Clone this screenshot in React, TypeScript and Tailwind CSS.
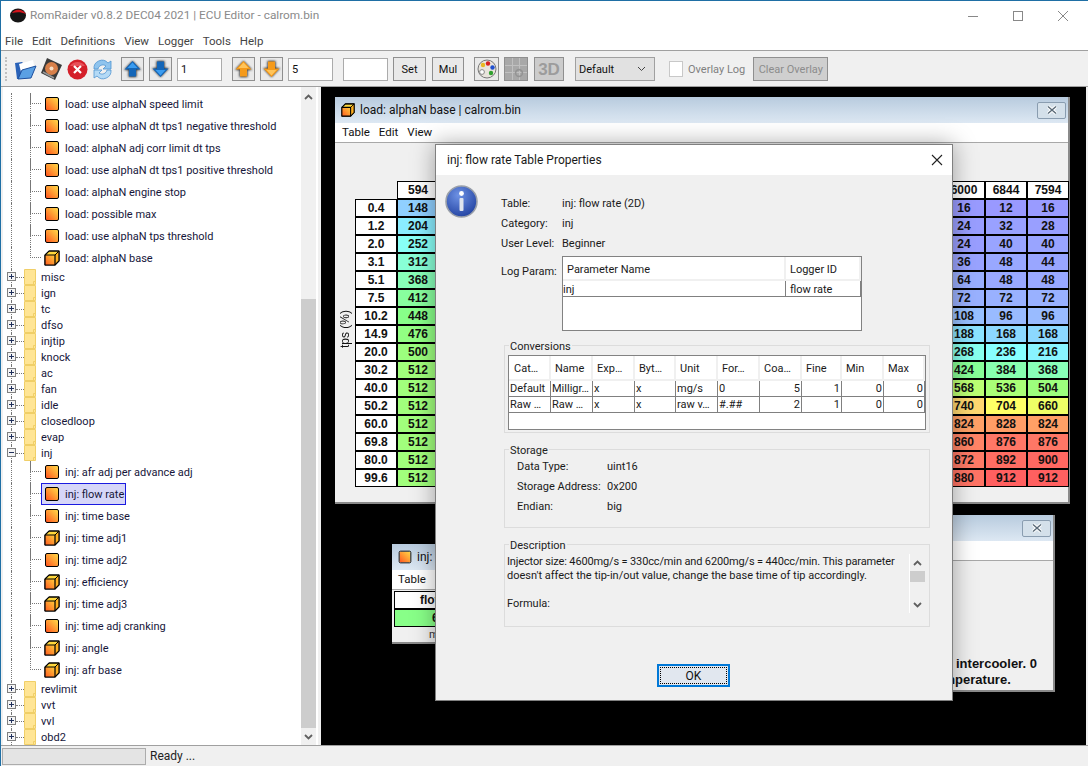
import type { ReactNode } from 'react';

const fontUi = "font-['Roboto',sans-serif]";

const rowAxis = ['0.4', '1.2', '2.0', '3.1', '5.1', '7.5', '10.2', '14.9', '20.0', '30.2', '40.0', '50.2', '60.0', '69.8', '80.0', '99.6'];
const firstCol = [148, 204, 252, 312, 368, 412, 448, 476, 500, 512, 512, 512, 512, 512, 512, 512];
const col6000 = [16, 24, 24, 36, 64, 72, 108, 188, 268, 424, 568, 740, 824, 860, 872, 880];
const col6844 = [12, 32, 40, 48, 48, 72, 96, 168, 236, 384, 536, 704, 828, 876, 892, 912];
const col7594 = [16, 28, 40, 44, 48, 72, 96, 168, 216, 368, 504, 660, 824, 876, 900, 912];

// heat scale used by the table cells
const stops: [number, number[]][] = [
  [12, [153, 153, 255]],
  [96, [153, 187, 255]],
  [168, [140, 216, 255]],
  [236, [136, 255, 255]],
  [368, [136, 255, 184]],
  [450, [136, 255, 136]],
  [536, [170, 255, 119]],
  [660, [238, 255, 102]],
  [704, [255, 255, 102]],
  [740, [255, 216, 112]],
  [824, [255, 160, 102]],
  [876, [255, 119, 102]],
  [912, [255, 96, 96]],
];

function heat(v: number) {
  for (let i = 1; i < stops.length; i++) {
    if (v <= stops[i][0]) {
      const [a, ca] = stops[i - 1];
      const [b, cb] = stops[i];
      const t = Math.max(0, (v - a) / (b - a));
      const c = ca.map((x, k) => Math.round(x + (cb[k] - x) * t));
      return `rgb(${c[0]},${c[1]},${c[2]})`;
    }
  }
  return 'rgb(255,96,96)';
}

function SquareIcon() {
  return <div className="w-[14px] h-[14px] shrink-0 rounded-[2px] border-[1.5px] border-black bg-gradient-to-tr from-[#ff4f1e] to-[#ffd848]" />;
}

function CubeIcon({ size = 16 }: { size?: number }) {
  return (
    <svg width={size} height={size} viewBox="0 0 16 16" className="shrink-0">
      <defs>
        <linearGradient id="cubeFace" x1="0" y1="1" x2="1" y2="0">
          <stop offset="0" stopColor="#ff5a1e" />
          <stop offset="1" stopColor="#ffcf3c" />
        </linearGradient>
      </defs>
      <path d="M1 5 L5 1 H15 V11 L11 15 H1 Z" fill="#ffd83c" stroke="#000" strokeWidth="1" strokeLinejoin="round" />
      <path d="M11 5 L15 1 V11 L11 15 Z" fill="#ffb020" />
      <path d="M1 5 H11 V15 H1 Z" fill="url(#cubeFace)" stroke="#000" strokeWidth="1.2" strokeLinejoin="round" />
      <path d="M11 5 L15 1" stroke="#000" strokeWidth="1" />
      <path d="M1 5 L5 1 H15 V11 L11 15" fill="none" stroke="#000" strokeWidth="1.2" />
    </svg>
  );
}

function FolderIcon() {
  return (
    <svg width="12" height="16" viewBox="0 0 12 16" className="shrink-0">
      <path d="M0.5 0.5 H11.5 V15.5 H0.5 Z" fill="#ffe595" stroke="#f0cf68" />
      <path d="M9.5 15.5 V12.5 H11.5" fill="none" stroke="#f0cf68" />
    </svg>
  );
}

function Leaf({ label, cube, selected, last }: { label: string; cube?: boolean; selected?: boolean; last?: boolean }) {
  return (
    <div className="flex h-[22px] items-stretch">
      <div className="w-[9px] shrink-0 border-r border-dotted border-[#777]" />
      <div className="w-[18px] shrink-0" />
      <div className="relative w-[11px] shrink-0">
        <div className="absolute left-0 top-0 w-[11px] h-[11px] border-l border-b border-dotted border-[#777]" />
        {!last && <div className="absolute left-0 top-0 h-full border-l border-dotted border-[#777]" />}
      </div>
      <div className={`flex items-center gap-[6px] h-[22px] pl-[4px] pr-[2px] ${selected ? 'bg-[#d6d6f8] outline outline-1 -outline-offset-1 outline-[#1a1ae0]' : ''}`}>
        {cube ? <div className="-ml-[1px] -mr-[1px]"><CubeIcon /></div> : <SquareIcon />}
        <span className="translate-y-px whitespace-nowrap text-[#16163a]">{label}</span>
      </div>
    </div>
  );
}

function Branch({ label, open }: { label: string; open?: boolean }) {
  return (
    <div className="flex h-[16px] items-center">
      <div className="relative w-[21px] h-full shrink-0">
        <div className="absolute left-[8px] top-0 h-full border-l border-dotted border-[#777]" />
        <div className="absolute left-[13px] top-[8px] w-[8px] border-t border-dotted border-[#777]" />
        <div className="absolute left-[4px] top-[3px] w-[9px] h-[9px] border border-[#808080] bg-[#f4f4f4] flex items-center justify-center">
          <div className="w-[5px] h-px bg-[#20305c]" />
          {!open && <div className="absolute w-px h-[5px] bg-[#20305c]" />}
        </div>
      </div>
      <FolderIcon />
      <span className="ml-[5px] translate-y-px whitespace-nowrap text-[#16163a]">{label}</span>
    </div>
  );
}

function Tree() {
  const load = ['load: use alphaN speed limit', 'load: use alphaN dt tps1 negative threshold', 'load: alphaN adj corr limit dt tps', 'load: use alphaN dt tps1 positive threshold', 'load: alphaN engine stop', 'load: possible max', 'load: use alphaN tps threshold'];
  const folders = ['misc', 'ign', 'tc', 'dfso', 'injtip', 'knock', 'ac', 'fan', 'idle', 'closedloop', 'evap'];
  return (
    <div className="flex w-[315px] shrink-0 bg-white overflow-hidden">
      <div className="flex-1 pt-[6px] overflow-hidden">
        {load.map((l) => <Leaf key={l} label={l} />)}
        <Leaf label="load: alphaN base" cube last />
        {folders.map((f) => <Branch key={f} label={f} />)}
        <Branch label="inj" open />
        <Leaf label="inj: afr adj per advance adj" />
        <Leaf label="inj: flow rate" selected />
        <Leaf label="inj: time base" />
        <Leaf label="inj: time adj1" cube />
        <Leaf label="inj: time adj2" />
        <Leaf label="inj: efficiency" cube />
        <Leaf label="inj: time adj3" cube />
        <Leaf label="inj: time adj cranking" />
        <Leaf label="inj: angle" cube />
        <Leaf label="inj: afr base" cube last />
        {['revlimit', 'vvt', 'vvl', 'obd2'].map((f) => <Branch key={f} label={f} />)}
      </div>
      <Scrollbar />
    </div>
  );
}

function Chevron({ up }: { up?: boolean }) {
  return (
    <svg width="9" height="6" viewBox="0 0 9 6" className="shrink-0">
      <path d={up ? 'M1 5 L4.5 1.5 L8 5' : 'M1 1 L4.5 4.5 L8 1'} fill="none" stroke="#606060" strokeWidth="1.8" />
    </svg>
  );
}

function Scrollbar() {
  return (
    <div className="flex flex-col w-[15px] mr-[2px] shrink-0 bg-[#f0f0f0]">
      <div className="h-[17px] mt-[1px] flex items-center justify-center"><Chevron up /></div>
      <div className="h-[194px]" />
      <div className="flex-1 bg-[#cdcdcd]" />
      <div className="h-[17px] flex items-center justify-center"><Chevron /></div>
    </div>
  );
}

function ToolBtn({ children, w = 'w-[23px]', dim }: { children: ReactNode; w?: string; dim?: boolean }) {
  return (
    <div className={`${w} h-[24px] shrink-0 flex items-center justify-center border border-[#8f8f8f] ${dim ? 'bg-[#cccccc]' : 'bg-[#e9e9e9]'}`}>
      {children}
    </div>
  );
}

function ArrowIcon({ down, orange }: { down?: boolean; orange?: boolean }) {
  const fill = orange ? '#f59a1a' : '#1466b8';
  return (
    <svg width="21" height="22" viewBox="0 0 21 22">
      <defs>
        <filter id="arrowGlow" x="-30%" y="-30%" width="160%" height="160%">
          <feGaussianBlur stdDeviation="1" />
        </filter>
      </defs>
      <g transform={down ? 'rotate(180 10.5 11)' : undefined}>
        <path d="M10.5 3 L19 12 H14.5 V19 H6.5 V12 H2 Z" fill="#222" filter="url(#arrowGlow)" />
        <path d="M10.5 3 L18.5 11.5 H14 V18.5 H7 V11.5 H2.5 Z" fill={fill} />
        <path d="M10.5 4.5 L15.5 10 H5.5 Z" fill={orange ? '#ffc45a' : '#3a9cf0'} />
      </g>
    </svg>
  );
}

function TextBox({ value, w }: { value?: string; w: string }) {
  return <div className={`${w} h-[23px] shrink-0 border border-[#ababab] bg-white pl-[3px] leading-[22px] text-[#111]`}>{value}</div>;
}

function Toolbar() {
  return (
    <div className="flex items-center h-[36px] pl-[4px] pt-[1px] bg-[#f0f0f0] border-b border-[#a0a0a0] shrink-0">
      <div className="w-[2px] h-[24px] border-l-2 border-dotted border-[#c0c0c0] shrink-0" />
      <svg width="24" height="24" viewBox="0 0 24 24" className="ml-[6px] shrink-0">
        <path d="M2 6 L9 5 L11 7 L20 6 L21 11 L6 22 L4 22 Z" fill="#2a62b8" />
        <path d="M6 7 L20 3 L22 12 L8 15 Z" fill="#fff" />
        <path d="M9 13 L23 9 L18 21 L5 22 Z" fill="#5aa0e4" stroke="#1d4f9e" />
      </svg>
      <svg width="23" height="24" viewBox="0 0 23 24" className="ml-[3px] shrink-0">
        <path d="M7 1 L22 8 L15 23 L1 16 Z" fill="#3a3a3a" />
        <circle cx="11.5" cy="11.5" r="6.5" fill="#d8804a" />
        <circle cx="11.5" cy="11.5" r="2" fill="#f8e0c8" />
        <path d="M3 15 L14 21" stroke="#999" strokeWidth="1.5" />
      </svg>
      <svg width="21" height="21" viewBox="0 0 21 21" className="ml-[4px] shrink-0">
        <circle cx="10.5" cy="10.5" r="10" fill="#d4202a" />
        <path d="M3 7 A 9 9 0 0 1 18 7 Z" fill="#e85058" />
        <path d="M7 7 L14 14 M14 7 L7 14" stroke="#fff" strokeWidth="2.2" />
      </svg>
      <svg width="21" height="21" viewBox="0 0 21 21" className="ml-[4px] shrink-0">
        <path d="M2 10 A 8 8 0 0 1 16 4 L19 2 L19 10 L11 10 L14 7 A 5 5 0 0 0 6 10 Z" fill="#8fc4ee" stroke="#4f94d0" strokeWidth="0.8" />
        <path d="M19 11 A 8 8 0 0 1 5 17 L2 19 L2 11 L10 11 L7 14 A 5 5 0 0 0 15 11 Z" fill="#b4daf6" stroke="#4f94d0" strokeWidth="0.8" />
      </svg>
      <div className="ml-[8px]"><ToolBtn><ArrowIcon /></ToolBtn></div>
      <div className="ml-[5px]"><ToolBtn><ArrowIcon down /></ToolBtn></div>
      <div className="ml-[5px]"><TextBox value="1" w="w-[45px]" /></div>
      <div className="ml-[10px]"><ToolBtn><ArrowIcon orange /></ToolBtn></div>
      <div className="ml-[5px]"><ToolBtn><ArrowIcon down orange /></ToolBtn></div>
      <div className="ml-[5px]"><TextBox value="5" w="w-[45px]" /></div>
      <div className="ml-[10px]"><TextBox w="w-[45px]" /></div>
      <div className="ml-[5px]"><ToolBtn w="w-[33px]"><span className="translate-y-px text-[#111]">Set</span></ToolBtn></div>
      <div className="ml-[6px]"><ToolBtn w="w-[32px]"><span className="translate-y-px text-[#111]">Mul</span></ToolBtn></div>
      <div className="ml-[10px]">
        <ToolBtn w="w-[25px]">
          <svg width="20" height="20" viewBox="0 0 20 20">
            <circle cx="10" cy="10" r="9" fill="#e8e4dc" stroke="#777" />
            <circle cx="6" cy="6" r="2.2" fill="#e8b820" />
            <circle cx="11" cy="4.5" r="2.2" fill="#d82020" />
            <circle cx="15.5" cy="8.5" r="2.2" fill="#2050d0" />
            <circle cx="14" cy="14" r="2.2" fill="#30a030" />
            <circle cx="5" cy="13" r="2.4" fill="#fff" stroke="#888" />
          </svg>
        </ToolBtn>
      </div>
      <div className="ml-[5px]">
        <ToolBtn w="w-[24px]" dim>
          <svg width="22" height="22" viewBox="0 0 22 22">
            <rect width="22" height="22" fill="#a8a8a8" />
            <path d="M0 7.5 H22 M0 14.5 H22 M7.5 0 V22 M14.5 0 V22" stroke="#c0c0c0" />
            <circle cx="14" cy="15" r="3.4" fill="none" stroke="#949494" strokeWidth="1.6" />
          </svg>
        </ToolBtn>
      </div>
      <div className="ml-[6px]">
        <ToolBtn w="w-[30px]" dim>
          <span className="font-['Liberation_Sans',sans-serif] font-bold text-[17px] leading-none text-[#9c9c9c]">3D</span>
        </ToolBtn>
      </div>
      <div className="ml-[11px] w-[80px] h-[24px] shrink-0 flex items-center justify-between pl-[3px] pr-[8px] border border-[#a0a0a0] bg-[#e1e1e1] text-[#111]">
        <span className="translate-y-px">Default</span>
        <svg width="9" height="6" viewBox="0 0 9 6"><path d="M1 1 L4.5 4.5 L8 1" fill="none" stroke="#444" /></svg>
      </div>
      <div className="ml-[14px] w-[14px] h-[16px] shrink-0 bg-white border border-[#c8c8c8]" />
      <span className="ml-[5px] translate-y-px whitespace-nowrap text-[#808080]">Overlay Log</span>
      <div className="ml-[8px] w-[75px] h-[24px] shrink-0 flex items-center justify-center border border-[#8f8f8f] bg-[#cfcfcf] text-[#8c8c8c] whitespace-nowrap"><span className="translate-y-px">Clear Overlay</span></div>
    </div>
  );
}

function FrameClose() {
  return (
    <div className="w-[29px] h-[17px] flex items-center justify-center rounded-[2px] border border-[#8a9db0] bg-[#d4e0ea]">
      <svg width="12" height="10" viewBox="0 0 12 10">
        <path d="M2 1.5 L10 8.5 M10 1.5 L2 8.5" stroke="#fff" strokeWidth="3.4" />
        <path d="M2 1.5 L10 8.5 M10 1.5 L2 8.5" stroke="#5a6a78" strokeWidth="1.4" />
      </svg>
    </div>
  );
}

function FrameHead({ title, square, close }: { title: string; square?: boolean; close?: boolean }) {
  return (
    <div className="h-[26px] flex items-center pl-[6px] pr-[2px] bg-gradient-to-b from-[#b8cbde] to-[#dde8f3] shrink-0">
      {square ? <div className="scale-90"><SquareIcon /></div> : <CubeIcon size={14} />}
      <span className="ml-[5px] whitespace-nowrap text-[12px] text-[#111]">{title}</span>
      {close && <div className="ml-auto"><FrameClose /></div>}
    </div>
  );
}

function Cell({ children, bg }: { children?: ReactNode; bg?: string }) {
  return (
    <div className="w-[42px] h-[18px] flex items-center justify-center border border-black bg-white leading-none" style={bg ? { backgroundColor: bg } : undefined}>
      {children}
    </div>
  );
}

function FuelTable() {
  const hidden = Array.from({ length: 12 });
  return (
    <div className="flex font-['Liberation_Sans',sans-serif] font-bold text-[12px] text-[#111]">
      <div className="flex flex-col">
        <div className="h-[18px]" />
        {rowAxis.map((r) => <Cell key={r}>{r}</Cell>)}
      </div>
      <div className="flex flex-col">
        <Cell>594</Cell>
        {firstCol.map((v, i) => <Cell key={i} bg={heat(v)}>{v}</Cell>)}
      </div>
      {hidden.map((_, i) => <div key={i} className="w-[42px]" />)}
      <div className="flex flex-col">
        <Cell>6000</Cell>
        {col6000.map((v, i) => <Cell key={i} bg={heat(v)}>{v}</Cell>)}
      </div>
      <div className="flex flex-col">
        <Cell>6844</Cell>
        {col6844.map((v, i) => <Cell key={i} bg={heat(v)}>{v}</Cell>)}
      </div>
      <div className="flex flex-col">
        <Cell>7594</Cell>
        {col7594.map((v, i) => <Cell key={i} bg={heat(v)}>{v}</Cell>)}
      </div>
    </div>
  );
}

function Desktop() {
  return (
    <div className="relative flex-1 bg-black overflow-hidden">
      {/* table frames sit on the desktop pane like internal windows */}
      <div className="absolute left-[14px] top-[10px] w-[735px] h-[407px] flex flex-col bg-[#f0f0f0] border-r-2 border-b-2 border-[#8a8a8a]">
        <FrameHead title="load: alphaN base | calrom.bin" close />
        <div className="h-[20px] flex items-center gap-[9px] pl-[7px] bg-white border-b border-[#a8a8a8] text-[11.5px] text-[#111] shrink-0">
          <span>Table</span><span>Edit</span><span>View</span>
        </div>
        <div className="flex items-center pl-[3px] pt-[38px]">
          <span className="w-[17px] pl-[3px] mb-[9px] [writing-mode:vertical-rl] rotate-180 text-[#111] whitespace-nowrap font-['Liberation_Sans',sans-serif] text-[12px] leading-[14px]">tps (%)</span>
          <FuelTable />
        </div>
      </div>

      <div className="absolute left-[71px] top-[457px] w-[120px] h-[100px] flex flex-col bg-[#f0f0f0] border-b-2 border-[#8a8a8a]">
        <FrameHead title="inj: flow rate" square />
        <div className="h-[20px] flex items-center pl-[6px] bg-white border-b border-[#a8a8a8] text-[11.5px] text-[#111] shrink-0">Table</div>
        <div className="ml-[2px] mt-[1px] h-[18px] flex items-center pl-[25px] border border-black bg-white font-['Liberation_Sans',sans-serif] font-bold text-[12px] text-[#111]">flow rate</div>
        <div className="ml-[2px] h-[18px] flex items-center pl-[37px] border border-black bg-[#88ff88] font-['Liberation_Sans',sans-serif] font-bold text-[12px] text-[#111]">6200</div>
        <div className="pl-[37px] text-[#333]">mg/s</div>
      </div>

      <div className="absolute left-[560px] top-[428px] w-[174px] h-[177px] flex flex-col bg-[#f0f0f0] border-r-2 border-b-2 border-[#8a8a8a]">
        <FrameHead title="ecu" square close />
        <div className="h-[20px] bg-white border-b border-[#a8a8a8] shrink-0" />
        <div className="mt-auto mb-[2px] font-['Liberation_Sans',sans-serif] font-bold text-[13px] leading-[16px] text-[#111] whitespace-nowrap">
          <div className="pl-[75px]">intercooler. 0</div>
          <div className="pl-[51px]">temperature.</div>
        </div>
      </div>
    </div>
  );
}

function Group({ title, h, children }: { title: string; h: string; children: ReactNode }) {
  return (
    <div className={`relative ${h} w-[426px] ml-[3px] border border-[#dcdcdc]`}>
      <span className="absolute left-[4px] -top-[6px] px-px bg-[#f0f0f0] text-[#222] leading-[14px] whitespace-nowrap">{title}</span>
      {children}
    </div>
  );
}

const convCols = [42, 42, 42, 41, 42, 42, 42, 40, 42, 41];
const convHead = ['Cat…', 'Name', 'Exp…', 'Byt…', 'Unit', 'For…', 'Coa…', 'Fine', 'Min', 'Max'];
const convRows = [
  ['Default', 'Milligr…', 'x', 'x', 'mg/s', '0', '5', '1', '0', '0'],
  ['Raw …', 'Raw …', 'x', 'x', 'raw v…', '#.##', '2', '1', '0', '0'],
];

function Dialog() {
  return (
    <div className="absolute left-[434px] top-[143px] w-[518px] h-[557px] flex flex-col bg-[#f0f0f0] border border-[#808080] shadow-[0_0_22px_rgba(0,0,0,0.35)] text-[#1a1a1a]">
      <div className="h-[30px] flex items-center justify-between pl-[11px] pr-[9px] bg-white text-[12px] shrink-0">
        <span>inj: flow rate Table Properties</span>
        <svg width="12" height="12" viewBox="0 0 12 12"><path d="M1 1 L11 11 M11 1 L1 11" stroke="#222" strokeWidth="1.1" /></svg>
      </div>
      <div className="flex flex-1">
        <div className="w-[65px] shrink-0 pl-[9px] pt-[10px]">
          <svg width="33" height="33" viewBox="0 0 33 33">
            <defs>
              <radialGradient id="infoBall" cx="0.4" cy="0.3" r="0.8">
                <stop offset="0" stopColor="#6e92e4" />
                <stop offset="1" stopColor="#1c3c9c" />
              </radialGradient>
            </defs>
            <circle cx="16.5" cy="16.5" r="15.5" fill="url(#infoBall)" stroke="#9aa0aa" strokeWidth="1.6" />
            <circle cx="16.5" cy="8.5" r="2.4" fill="#fff" />
            <rect x="14.5" y="13" width="4" height="13" rx="1" fill="#dfe4ee" />
          </svg>
        </div>
        <div className="flex flex-col pt-[19px]">
          {[['Table:', 'inj: flow rate (2D)'], ['Category:', 'inj'], ['User Level:', 'Beginner']].map(([k, v]) => (
            <div key={k} className="flex h-[20px] items-center">
              <span className="w-[61px]">{k}</span><span>{v}</span>
            </div>
          ))}
          <div className="flex mt-[2px]">
            <span className="w-[61px] h-[33px] flex items-center">Log Param:</span>
            <div className="w-[300px] h-[75px] border border-[#828282] bg-white">
              <div className="flex h-[24px]">
                <div className="w-[223px] flex items-center pl-[4px] pt-[4px] border-r-2 border-b-2 border-[#f0f0f0]">Parameter Name</div>
                <div className="flex-1 flex items-center pl-[4px] pt-[4px] border-r-2 border-b-2 border-[#f0f0f0]">Logger ID</div>
              </div>
              <div className="flex h-[16px] border-b border-[#808080] leading-[17px]">
                <div className="w-[223px] border-r border-[#808080]">inj</div>
                <div className="flex-1 pl-[4px] border-r border-[#808080]">flow rate</div>
              </div>
            </div>
          </div>
          <div className="mt-[14px]">
            <Group title="Conversions" h="h-[88px]">
              <div className="ml-[3px] mt-[9px] w-[418px] h-[75px] border border-[#828282] bg-white">
                <div className="flex h-[25px]">
                  {convHead.map((h, i) => (
                    <div key={h} className={`flex items-center pl-[4px] pt-[4px] border-r-2 border-b-2 border-[#f0f0f0] ${i === 0 ? 'pl-[5px]' : ''}`} style={{ width: convCols[i] }}>{h}</div>
                  ))}
                </div>
                {convRows.map((r) => (
                  <div key={r[0]} className="flex h-[16px] border-b border-[#808080] leading-[15px]">
                    {r.map((c, i) => (
                      <div key={i} className={`border-r border-[#808080] overflow-hidden whitespace-nowrap ${i >= 6 ? 'text-right pr-[1px]' : 'pl-px'}`} style={{ width: convCols[i] }}>{c}</div>
                    ))}
                  </div>
                ))}
              </div>
            </Group>
          </div>
          <div className="mt-[16px]">
            <Group title="Storage" h="h-[79px]">
              <div className="pl-[12px] pt-[7px]">
                {[['Data Type:', 'uint16'], ['Storage Address:', '0x200'], ['Endian:', 'big']].map(([k, v]) => (
                  <div key={k} className="flex h-[20px] items-center">
                    <span className="w-[90px] whitespace-nowrap">{k}</span><span>{v}</span>
                  </div>
                ))}
              </div>
            </Group>
          </div>
          <div className="mt-[16px]">
            <Group title="Description" h="h-[83px]">
              <div className="flex pt-[9px] pl-[2px]">
                <div className="w-[402px] shrink-0 pt-px leading-[14px] whitespace-nowrap">
                  <p className="tracking-[-0.14px]">Injector size: 4600mg/s = 330cc/min and 6200mg/s = 440cc/min. This parameter</p>
                  <p>doesn't affect the tip-in/out value, change the base time of tip accordingly.</p>
                  <p className="mt-[14px]">Formula:</p>
                </div>
                <div className="w-[16px] h-[59px] flex flex-col shrink-0 border-l border-white">
                  <div className="h-[17px] flex items-center justify-center"><Chevron up /></div>
                  <div className="h-[11px] bg-[#cdcdcd]" />
                  <div className="flex-1" />
                  <div className="h-[17px] flex items-center justify-center"><Chevron /></div>
                </div>
              </div>
            </Group>
          </div>
          <div className="mt-[37px] ml-[156px] w-[73px] h-[23px] p-px border-2 border-[#0078d7] bg-[#e1e7ef]">
            <div className="h-full flex items-center justify-center border border-dotted border-black text-[12px] text-[#111]">OK</div>
          </div>
        </div>
      </div>
    </div>
  );
}

export default function App() {
  return (
    <div className={`relative w-[1088px] h-[766px] overflow-hidden flex flex-col bg-[#f0f0f0] border-t border-l border-[#1f6fa5] text-[11px] ${fontUi}`}>
      <div className="h-[29px] flex items-center pl-[8px] bg-white shrink-0">
        <svg width="18" height="15" viewBox="0 0 18 15" className="shrink-0">
          <ellipse cx="9" cy="7.5" rx="8" ry="7" fill="#151515" />
          <path d="M3 5 C 5 1, 13 0, 17 6 C 12 3.5, 7 4, 3 5 Z" fill="#d4141c" />
        </svg>
        <span className="ml-[3px] text-[11.8px] text-[#8a8a8a] whitespace-nowrap">RomRaider v0.8.2 DEC04 2021 | ECU Editor - calrom.bin</span>
        <div className="ml-auto flex items-center gap-[35px] pr-[20px]">
          <svg width="10" height="10" viewBox="0 0 10 10"><path d="M0 5.5 H10" stroke="#888" /></svg>
          <svg width="10" height="10" viewBox="0 0 10 10"><rect x="0.5" y="0.5" width="9" height="9" fill="none" stroke="#888" /></svg>
          <svg width="10" height="10" viewBox="0 0 10 10"><path d="M0 0 L10 10 M10 0 L0 10" stroke="#888" /></svg>
        </div>
      </div>
      <div className="h-[21px] flex items-center gap-[9px] pl-[4px] pt-[3px] bg-white border-b border-[#a0a0a0] text-[11.5px] text-[#444] shrink-0">
        <span>File</span><span>Edit</span><span>Definitions</span><span>View</span><span>Logger</span><span>Tools</span><span>Help</span>
      </div>
      <Toolbar />
      <div className="flex flex-1 min-h-0 pl-[2px] pr-[2px] border-b border-[#a0a0a0]">
        <Tree />
        <div className="w-[3px] shrink-0 bg-[#f0f0f0]" />
        <Desktop />
      </div>
      <div className="h-[20px] flex items-center pl-[1px] shrink-0">
        <div className="w-[144px] h-[17px] border border-[#acacac] bg-[#e4e4e4]" />
        <span className="ml-[4px] text-[12px] text-[#222]">Ready ...</span>
      </div>
      <Dialog />
    </div>
  );
}
